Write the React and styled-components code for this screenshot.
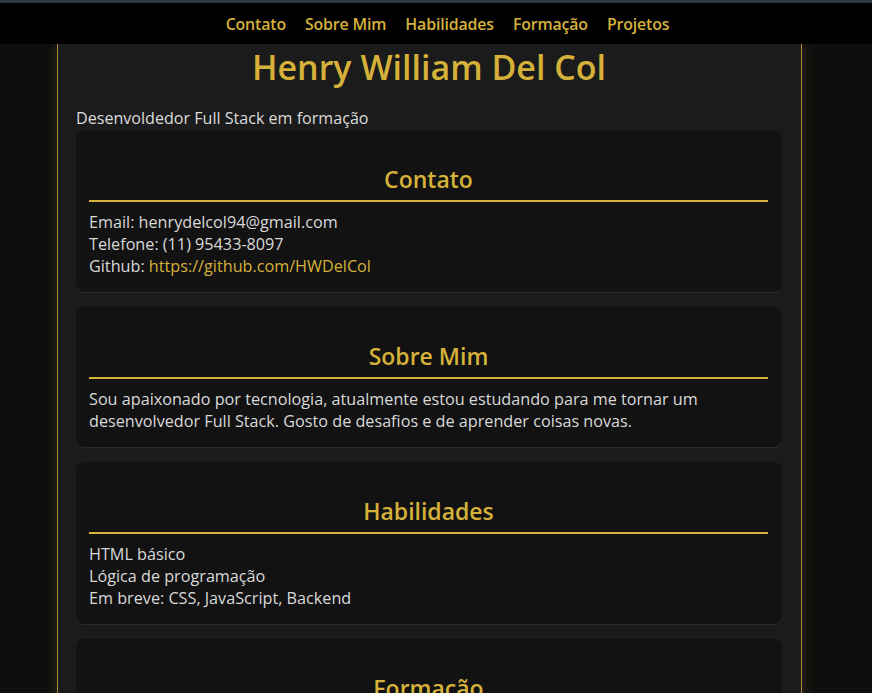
import React from "react";
import styled, { createGlobalStyle } from "styled-components";

const gold = "#d5b13a";

const GlobalStyle = createGlobalStyle`
  body {
    margin: 0;
    background: #0e0e0e;
    font-family: "Open Sans", "Noto Sans", sans-serif;
    color: #d9d9d9;
  }
`;

const Nav = styled.nav`
  position: sticky;
  top: 0;
  z-index: 2;
  height: 41px;
  background: #000;
  border-top: 3px solid #2d3842;
  display: flex;
  justify-content: center;
  align-items: center;
  gap: 19px;
  padding-left: 23px;
`;

const NavLink = styled.a`
  color: ${gold};
  font-size: 15.9px;
  font-weight: 600;
  letter-spacing: -0.15px;
  text-decoration: none;
`;

const Main = styled.main`
  box-sizing: border-box;
  width: 745px;
  margin-left: 57px;
  padding: 0 19px 1px 18px;
  background: #1b1b1b;
  border-left: 1px solid #a8892c;
  border-right: 1px solid #a8892c;
  box-shadow: 0 0 14px rgba(214, 176, 58, 0.18);
  min-height: 900px;
`;

const Title = styled.h1`
  margin: 0;
  text-align: center;
  font-size: 34px;
  font-weight: 600;
  line-height: 46px;
  color: ${gold};
`;

const Subtitle = styled.p`
  margin: 17px 0 1px;
  font-size: 16.1px;
  line-height: 22px;
  color: #dcdcdc;
`;

const Card = styled.section`
  background: #121212;
  border-radius: 8px;
  padding: 14px 14px 15px 13px;
  margin-bottom: 15px;
  box-shadow: 0 1px 0 rgba(255, 255, 255, 0.08);
`;

const CardTitle = styled.h2`
  margin: 19px 0 9px;
  padding-bottom: 5px;
  border-bottom: 2px solid ${gold};
  text-align: center;
  font-size: 23px;
  font-weight: 600;
  line-height: 32px;
  color: ${gold};
`;

const Line = styled.p`
  margin: 0;
  font-size: 16.2px;
  line-height: 22px;
  color: #d9d9d9;
`;

const Link = styled.a`
  color: ${gold};
  text-decoration: none;
`;

export default function App() {
  return (
    <>
      <GlobalStyle />
      <Nav>
        <NavLink href="#contato">Contato</NavLink>
        <NavLink href="#sobre">Sobre Mim</NavLink>
        <NavLink href="#habilidades">Habilidades</NavLink>
        <NavLink href="#formacao">Formação</NavLink>
        <NavLink href="#projetos">Projetos</NavLink>
      </Nav>
      <Main>
        <Title>Henry William Del Col</Title>
        <Subtitle>Desenvoldedor Full Stack em formação</Subtitle>

        <Card id="contato">
          <CardTitle>Contato</CardTitle>
          <Line>Email: henrydelcol94@gmail.com</Line>
          <Line>Telefone: (11) 95433-8097</Line>
          <Line>
            Github: <Link href="#">https://github.com/HWDelCol</Link>
          </Line>
        </Card>

        <Card id="sobre">
          <CardTitle>Sobre Mim</CardTitle>
          <Line>
            Sou apaixonado por tecnologia, atualmente estou estudando para me tornar um
            desenvolvedor Full Stack. Gosto de desafios e de aprender coisas novas.
          </Line>
        </Card>

        <Card id="habilidades">
          <CardTitle>Habilidades</CardTitle>
          <Line>HTML básico</Line>
          <Line>Lógica de programação</Line>
          <Line>Em breve: CSS, JavaScript, Backend</Line>
        </Card>

        <Card id="formacao">
          <CardTitle>Formação</CardTitle>
          <Line>Em andamento</Line>
        </Card>

        <Card id="projetos">
          <CardTitle>Projetos</CardTitle>
          <Line>Em breve</Line>
        </Card>
      </Main>
    </>
  );
}
